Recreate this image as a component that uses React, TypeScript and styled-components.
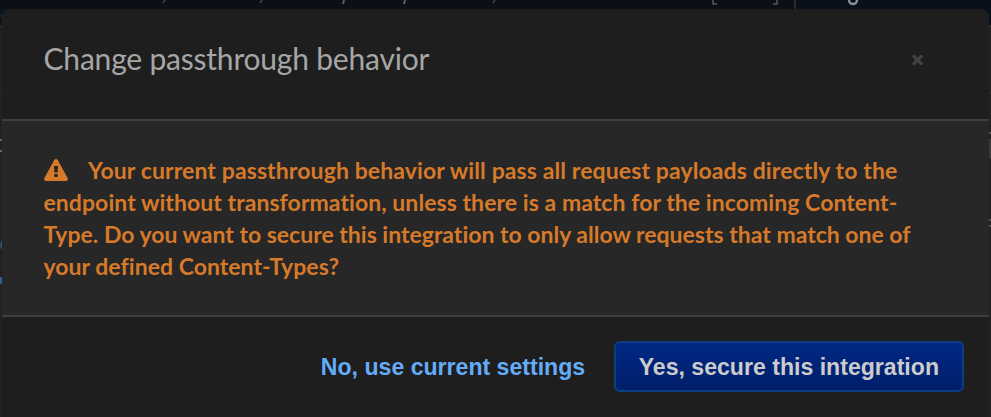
import React from "react";
import styled, { createGlobalStyle } from "styled-components";

const GlobalStyle = createGlobalStyle`
  * { box-sizing: border-box; }
  html, body { margin: 0; background: #212121; overflow: hidden; }
`;

const Page = styled.div`
  position: relative;
  height: 417px;
  padding: 9px 2px 0;
  background: #212121;
  overflow: hidden;
  font-family: Lato, sans-serif;
`;

const Backdrop = styled.svg`
  position: absolute;
  inset: 0;
`;

const Dialog = styled.section`
  position: relative;
  height: 408px;
  display: flex;
  flex-direction: column;
  border-radius: 8px 8px 0 0;
  background: #1e1e1e;
  overflow: hidden;
`;

const Header = styled.header`
  height: 112px;
  flex: none;
  display: flex;
  align-items: center;
  justify-content: space-between;
  padding: 0 66px 11px 41.5px;
  border-bottom: 2px solid #3e3e3e;
`;

const Title = styled.h1`
  margin: -2px 0 0;
  font-size: 30px;
  line-height: 40px;
  font-weight: 400;
  letter-spacing: -0.2px;
  color: #a6a6a6;
  white-space: nowrap;
`;

const CloseButton = styled.button`
  display: flex;
  padding: 2px 0 0;
  border: 0;
  background: none;
  color: #424242;
`;

const Body = styled.div`
  height: 196px;
  flex: none;
  padding: 33px 41.5px 0;
  background: #272727;
  border-bottom: 2px solid #3e3e3e;
`;

const Message = styled.p`
  margin: 0;
  font-size: 23px;
  line-height: 32px;
  font-weight: 700;
  font-variant-ligatures: none;
  color: #d67a2a;
  white-space: nowrap;
`;

const Line = styled.span<{ $spacing: number }>`
  letter-spacing: ${(p) => p.$spacing}px;
`;

const WarningIcon = styled.svg`
  margin-right: 20.5px;
  vertical-align: -2px;
`;

const Footer = styled.footer`
  flex: 1;
  display: flex;
  align-items: flex-start;
  justify-content: flex-end;
  padding: 24px 25px 0;
`;

const Button = styled.button<{ $primary?: boolean }>`
  height: 51px;
  padding: 2px ${(p) => (p.$primary ? "23px" : "26.5px")} 0;
  border: 2px solid ${(p) => (p.$primary ? "#0b3f82" : "transparent")};
  border-radius: 6px;
  background: ${(p) => (p.$primary ? "linear-gradient(#002884, #001f6b)" : "none")};
  color: ${(p) => (p.$primary ? "#cccccc" : "#64acf8")};
  font: bold 23.1px "Liberation Sans", Arial, sans-serif;
  white-space: nowrap;
`;

const LINES = [
  { text: "Your current passthrough behavior will pass all request payloads directly to the", spacing: 0.11 },
  { text: "endpoint without transformation, unless there is a match for the incoming Content-", spacing: 0.06 },
  { text: "Type. Do you want to secure this integration to only allow requests that match one of", spacing: 0 },
  { text: "your defined Content-Types?", spacing: 0.03 },
];

export default function App() {
  return (
    <>
      <GlobalStyle />
      <Page>
        <Backdrop width="991" height="417" aria-hidden="true">
          <rect width="991" height="9" fill="#0c1016" />
          <rect x="796" width="195" height="25" fill="#08111b" />
          <rect y="9" width="8" height="17" fill="#0c151d" />
          <path d="M795 0v10" stroke="#27292c" strokeWidth="2" />
          <path d="M165 0l-2 3M262 0l-2 3M495 0l-2 3" stroke="#50545a" strokeWidth="1.2" />
          <path d="M344 0l-1 4M405 0l-1 4" stroke="#5b5f64" strokeWidth="2" />
          <path d="M713 0v4h4M777 0v4h-4" stroke="#55585d" strokeWidth="1.5" fill="none" />
          <circle cx="853" cy="0" r="4" stroke="#8b8d90" strokeWidth="2.5" fill="none" />
          <path d="M0 16h2M0 26h2M0 93h2M0 176h2M989 26h2M989 93h2" stroke="#353535" />
          <path d="M0 140h3M0 151h3" stroke="#666" strokeWidth="2" />
          <path d="M989 133h2M989 220h2M989 226h2" stroke="#555" strokeWidth="2" />
          <rect x="989" y="139" width="2" height="19" fill="#343a40" />
          <circle cx="7" cy="245" r="6" stroke="#354e75" strokeWidth="2" fill="none" />
          <rect y="277" width="3" height="7" fill="#365b84" />
        </Backdrop>
        <Dialog role="dialog" aria-modal="true">
          <Header>
            <Title>Change passthrough behavior</Title>
            <CloseButton aria-label="Close">
              <svg width="11" height="10" viewBox="0 0 11 10">
                <path d="M2 1.5l7 7M9 1.5l-7 7" stroke="currentColor" strokeWidth="3.2" strokeLinecap="square" />
              </svg>
            </CloseButton>
          </Header>
          <Body>
            <Message>
              <WarningIcon width="24" height="22" viewBox="0 0 24 22" aria-hidden="true">
                <path
                  fill="currentColor"
                  fillRule="evenodd"
                  d="M12 0q1.2 0 1.8 1.1l9.8 18q.6 1.1 0 2t-1.8.9H2.2q-1.2 0-1.8-.9t0-2l9.8-18Q10.800 0 12 0zM10 7l.3 6.500h3.400L14 7zM10.300 15v3h3.400v-3z"
                />
              </WarningIcon>
              {LINES.map(({ text, spacing }, i) => (
                <React.Fragment key={text}>
                  {i > 0 && <br />}
                  <Line $spacing={spacing}>{text}</Line>
                </React.Fragment>
              ))}
            </Message>
          </Body>
          <Footer>
            <Button>No, use current settings</Button>
            <Button $primary>Yes, secure this integration</Button>
          </Footer>
        </Dialog>
      </Page>
    </>
  );
}
